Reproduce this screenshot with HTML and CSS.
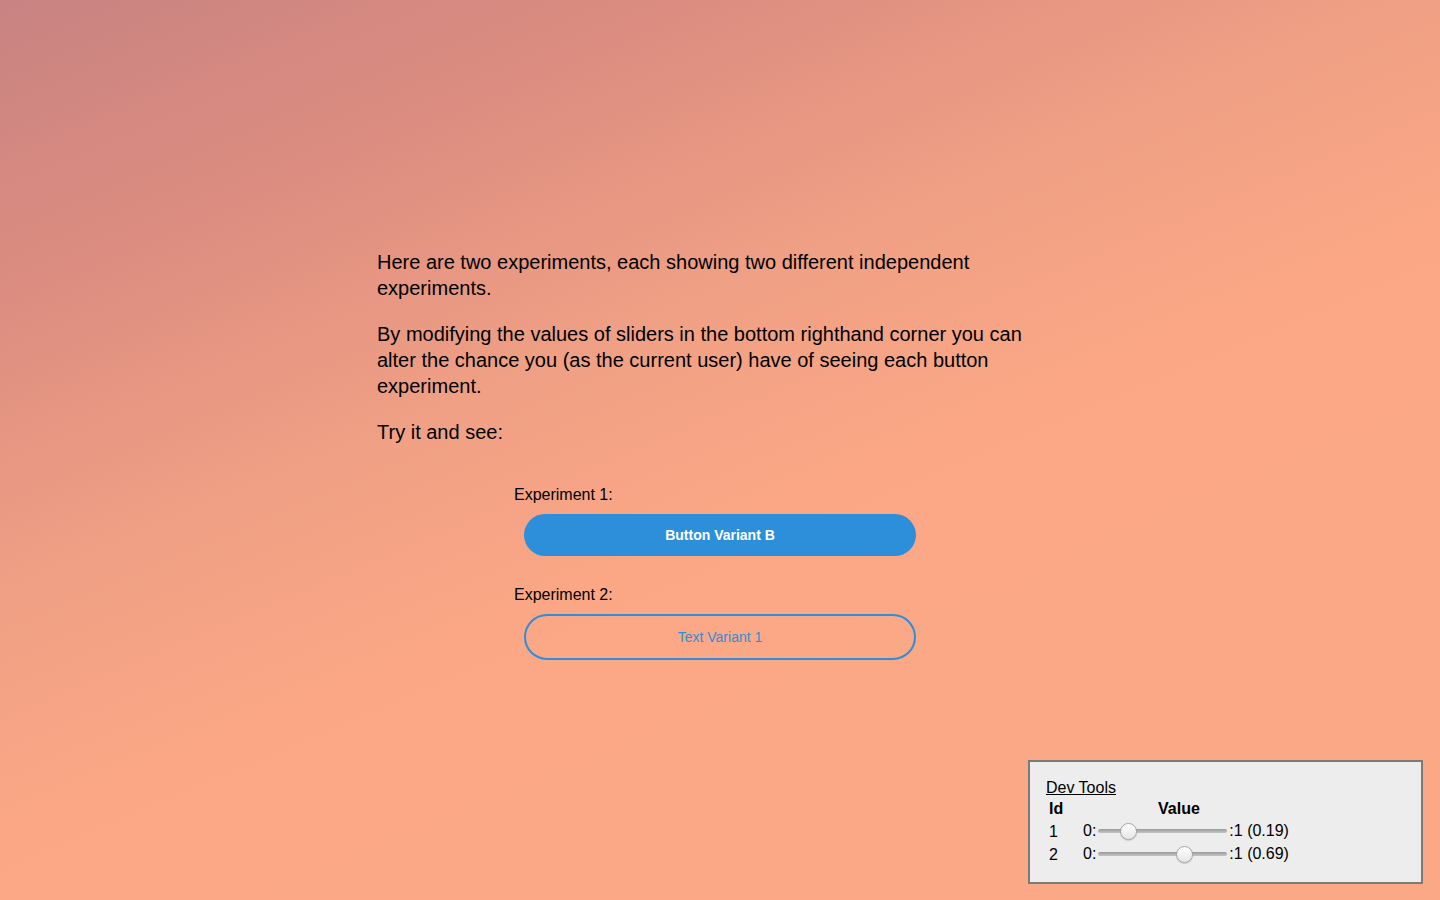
FILE: index.html
```html
<!DOCTYPE html>
<html lang="en">
<head>
<meta charset="utf-8">
<title>Experiments</title>
<link rel="stylesheet" href="styles.css">
</head>
<body>
<main class="page">
  <p class="intro">Here are two experiments, each showing two different independent experiments.</p>
  <p class="intro">By modifying the values of sliders in the bottom righthand corner you can alter the chance you (as the current user) have of seeing each button experiment.</p>
  <p class="intro">Try it and see:</p>

  <section class="experiments">
    <div class="experiment">
      <div class="exp-label">Experiment 1:</div>
      <button class="btn btn-filled">Button Variant B</button>
    </div>
    <div class="experiment">
      <div class="exp-label">Experiment 2:</div>
      <button class="btn btn-outline">Text Variant 1</button>
    </div>
  </section>
</main>

<aside class="devtools">
  <a class="devtools-title" href="#">Dev Tools</a>
  <table class="devtable">
    <thead>
      <tr><th class="col-id">Id</th><th class="col-value">Value</th></tr>
    </thead>
    <tbody>
      <tr>
        <td class="col-id">1</td>
        <td class="cell-value">0:<input class="slider" type="range" min="0" max="1" step="0.01" value="0.19">:1 (0.19)</td>
      </tr>
      <tr>
        <td class="col-id">2</td>
        <td class="cell-value">0:<input class="slider" type="range" min="0" max="1" step="0.01" value="0.69">:1 (0.69)</td>
      </tr>
    </tbody>
  </table>
</aside>
</body>
</html>
```

FILE: styles.css
```css
html, body {
  margin: 0;
  padding: 0;
  height: 100%;
}

body {
  font-family: "Liberation Sans", Arial, Helvetica, sans-serif;
  color: #000;
  background: linear-gradient(157deg, #c88382 0%, #dd8d80 20%, #f0a084 40%, #fca886 58%, #fba886 100%);
  background-attachment: fixed;
  min-height: 900px;
}

.page {
  width: 686px;
  margin: 0 auto;
  padding-top: 249px;
}

.intro {
  font-size: 20px;
  line-height: 26px;
  margin: 0 0 20px;
}

.experiments {
  width: 412px;
  margin: 39px auto 0;
  display: flex;
  flex-direction: column;
  gap: 28px;
}

.experiment {
  display: flex;
  flex-direction: column;
  gap: 10px;
}

.exp-label {
  font-size: 16px;
  line-height: 18px;
  padding-top: 2px;
}

.btn {
  font-family: "Liberation Sans", Arial, Helvetica, sans-serif;
  font-size: 14px;
  margin: 0 10px;
  width: 392px;
  border-radius: 24px;
  cursor: pointer;
  padding: 0;
}

.btn-filled {
  height: 42px;
  background: #2d8fd9;
  border: none;
  color: #fff;
  font-weight: bold;
}

.btn-outline {
  height: 46px;
  background: transparent;
  border: 2px solid #2d8fd9;
  color: #2d8fd9;
}

.devtools {
  position: fixed;
  right: 17px;
  bottom: 16px;
  width: 395px;
  box-sizing: border-box;
  background: #ededed;
  border: 2px solid #7a7a7a;
  padding: 17px 16px 15px;
  font-size: 16px;
  line-height: 18px;
}

.devtools-title {
  color: #000;
  text-decoration: underline;
  display: block;
}

.devtable {
  border-spacing: 2px;
  font-size: 16px;
}

.devtable th,
.devtable td {
  padding: 1px;
  text-align: left;
  vertical-align: middle;
}

.col-id {
  width: 30px;
}

.col-value {
  padding-left: 76px !important;
}

.cell-value {
  white-space: nowrap;
  height: 19px;
  line-height: 18px;
}

.slider {
  -webkit-appearance: none;
  appearance: none;
  width: 129px;
  height: 17px;
  margin: 0 2px;
  padding: 0;
  background: transparent;
  vertical-align: middle;
  position: relative;
  top: -1px;
}

.slider::-webkit-slider-runnable-track {
  height: 4px;
  border-radius: 2px;
  background: linear-gradient(#9a9a9a, #c4c4c4);
  border: none;
}

.slider::-webkit-slider-thumb {
  -webkit-appearance: none;
  appearance: none;
  width: 17px;
  height: 17px;
  margin-top: -6.5px;
  border-radius: 50%;
  background: linear-gradient(#ffffff, #e6e6e6);
  border: 1px solid #a4a4a4;
  box-sizing: border-box;
  box-shadow: 0 1px 1px rgba(0,0,0,0.15);
}
```
